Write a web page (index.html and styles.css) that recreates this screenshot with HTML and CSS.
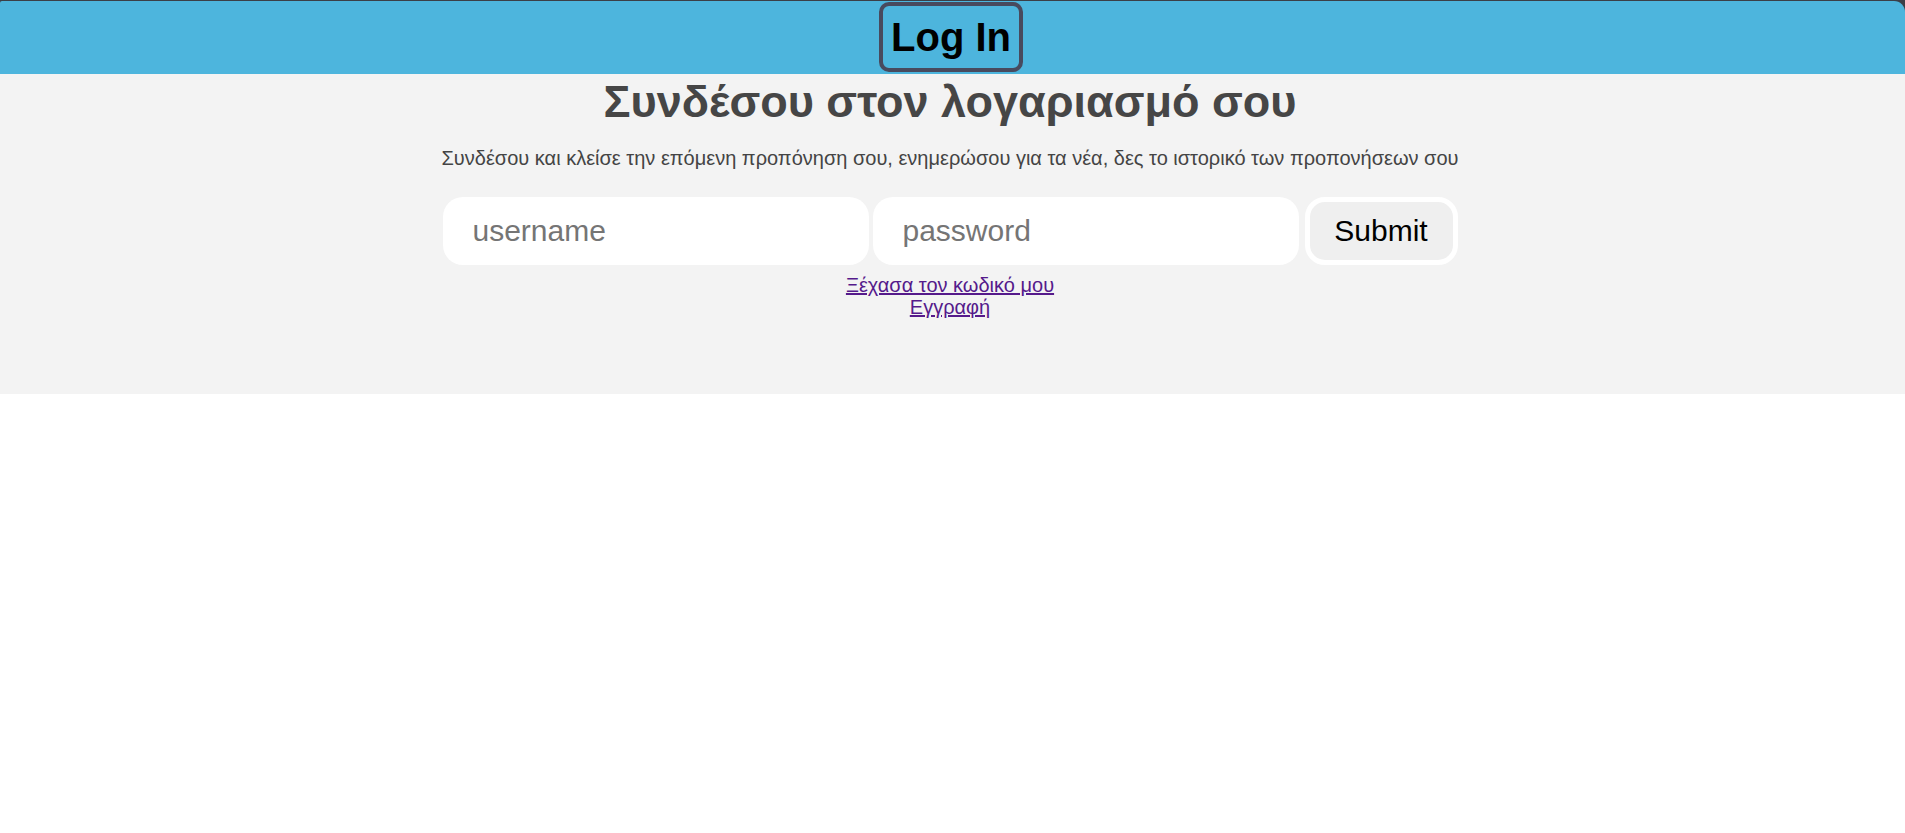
FILE: index.html
```html
<!DOCTYPE html>
<html lang="el">
<head>
<meta charset="utf-8">
<title>Log In</title>
<link rel="stylesheet" href="styles.css">
</head>
<body>
<div class="frame">
  <header class="topbar">
    <div class="brand">Log In</div>
  </header>
</div>
<main class="login">
  <h1 class="title">Συνδέσου στον λογαριασμό σου</h1>
  <p class="subtitle">Συνδέσου και κλείσε την επόμενη προπόνηση σου, ενημερώσου για τα νέα, δες το ιστορικό των προπονήσεων σου</p>
  <form class="form-row" onsubmit="return false">
    <input class="field" type="text" placeholder="username">
    <input class="field field-pass" type="password" placeholder="password">
    <button class="submit" type="submit">Submit</button>
  </form>
  <div class="links">
    <a href="#forgot" class="link">Ξέχασα τον κωδικό μου</a>
    <a href="#register" class="link">Εγγραφή</a>
  </div>
</main>
</body>
</html>
```
FILE: styles.css
```css
html, body {
  margin: 0;
  padding: 0;
  background: #ffffff;
  font-family: "Liberation Sans", Arial, sans-serif;
}

.frame {
  background: #3b3f47;
  padding-top: 1px;
}

.topbar {
  height: 73px;
  background: #4db5dd;
  border-top-right-radius: 11px;
  border-top-left-radius: 2px;
  display: flex;
  justify-content: center;
  align-items: center;
  padding-right: 3px;
  box-sizing: border-box;
}

.brand {
  box-sizing: border-box;
  height: 70px;
  width: 144px;
  border: 4px solid #484a5e;
  border-radius: 10px;
  font-size: 40px;
  font-weight: bold;
  color: #000;
  display: flex;
  align-items: center;
  justify-content: center;
  margin-top: -1px;
}

.login {
  background: #f3f3f3;
  height: 320px;
  box-sizing: border-box;
  padding: 2px 5px 0 0;
  display: flex;
  flex-direction: column;
  align-items: center;
}

.title {
  margin: 0;
  font-size: 45px;
  line-height: 52px;
  font-weight: bold;
  color: #464646;
}

.subtitle {
  margin: 19px 0 0;
  font-size: 20px;
  line-height: 23px;
  color: #444444;
}

.form-row {
  margin: 27px 0 0;
  display: flex;
  align-items: center;
}

.field {
  box-sizing: border-box;
  width: 426px;
  height: 68px;
  border: none;
  border-radius: 20px;
  background: #ffffff;
  padding: 0 30px;
  font-family: "Liberation Sans", Arial, sans-serif;
  font-size: 30px;
  color: #000;
  outline: none;
}

.field::placeholder {
  color: #757575;
}

.field-pass {
  margin-left: 4px;
}

.submit {
  box-sizing: border-box;
  margin-left: 6px;
  width: 153px;
  height: 68px;
  border: 5px solid #ffffff;
  border-radius: 20px;
  background: #efefef;
  font-family: "Liberation Sans", Arial, sans-serif;
  font-size: 30px;
  color: #000;
  padding: 0;
}

.links {
  margin-top: 9px;
  display: flex;
  flex-direction: column;
  align-items: center;
}

.link {
  font-size: 20px;
  line-height: 22px;
  color: #551a8b;
  text-decoration: underline;
}
```
